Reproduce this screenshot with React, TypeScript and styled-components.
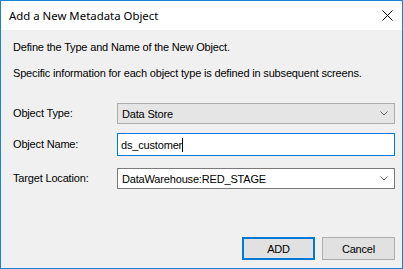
import React from 'react'
import styled, { createGlobalStyle } from 'styled-components'

const GlobalStyle = createGlobalStyle`
  html, body {
    margin: 0;
    padding: 0;
    background: #ffffff;
  }
`

const Window = styled.div`
  box-sizing: border-box;
  width: 403px;
  height: 269px;
  border: 1px solid #1883d7;
  display: flex;
  flex-direction: column;
  background: #f0f0f0;
  font-family: 'Liberation Sans', Arial, sans-serif;
  font-size: 11px;
  letter-spacing: -0.17px;
  color: #000;
`

const TitleBar = styled.div`
  height: 29px;
  background: #ffffff;
  display: flex;
  align-items: center;
  justify-content: space-between;
  padding: 0 9px 0 8px;
`

const Title = styled.span`
  font-family: 'Noto Sans', 'Open Sans', sans-serif;
  font-size: 11.4px;
  letter-spacing: 0;
  color: #000;
  margin-top: -1px;
`

const CloseButton = styled.button`
  border: none;
  background: transparent;
  padding: 0;
  width: 12px;
  height: 12px;
  display: flex;
  align-items: center;
  justify-content: center;
`

const Body = styled.div`
  flex: 1;
  display: flex;
  flex-direction: column;
  padding: 11px 7px 8px 12px;
`

const Intro = styled.p<{ $gap?: number }>`
  margin: 0 0 ${({ $gap }) => $gap ?? 0}px 0;
  line-height: 13px;
`

const Row = styled.div<{ $top: number }>`
  display: flex;
  align-items: center;
  margin-top: ${({ $top }) => $top}px;
`

const Label = styled.label`
  width: 104px;
  line-height: 13px;
`

const Select = styled.div<{ $readonly?: boolean }>`
  box-sizing: border-box;
  width: 278px;
  height: 21px;
  display: flex;
  align-items: center;
  justify-content: space-between;
  padding: 0 6px 0 4px;
  border: 1px solid ${({ $readonly }) => ($readonly ? '#adadad' : '#7a7a7a')};
  background: ${({ $readonly }) => ($readonly ? '#e5e5e5' : '#ffffff')};
`

const TextBox = styled.div`
  box-sizing: border-box;
  width: 278px;
  height: 23px;
  display: flex;
  align-items: center;
  padding: 0 3px;
  border: 1px solid #0078d7;
  background: #ffffff;
`

const Caret = styled.span`
  display: inline-block;
  width: 1px;
  height: 14px;
  background: #000;
`

const Footer = styled.div`
  margin-top: auto;
  display: flex;
  justify-content: flex-end;
  gap: 7px;
`

const Button = styled.button<{ $primary?: boolean }>`
  box-sizing: border-box;
  width: 73px;
  height: 23px;
  padding: 0;
  font-family: 'Liberation Sans', Arial, sans-serif;
  font-size: 11px;
  letter-spacing: -0.17px;
  color: #000;
  background: #e1e1e1;
  border: ${({ $primary }) => ($primary ? '2px solid #0078d7' : '1px solid #adadad')};
`

const Chevron = () => (
  <svg width="8" height="5" viewBox="0 0 8 5">
    <path d="M0.5 0.5 L4 4 L7.5 0.5" fill="none" stroke="#606060" strokeWidth="1" />
  </svg>
)

export default function App() {
  return (
    <>
      <GlobalStyle />
      <Window>
        <TitleBar>
          <Title>Add a New Metadata Object</Title>
          <CloseButton aria-label="Close">
            <svg width="11" height="11" viewBox="0 0 11 11">
              <path d="M0.5 0.5 L10.5 10.5 M10.5 0.5 L0.5 10.5" stroke="#000" strokeWidth="1" />
            </svg>
          </CloseButton>
        </TitleBar>
        <Body>
          <Intro $gap={13}>Define the Type and Name of the New Object.</Intro>
          <Intro>Specific information for each object type is defined in subsequent screens.</Intro>
          <Row $top={23}>
            <Label>Object Type:</Label>
            <Select $readonly>
              <span>Data Store</span>
              <Chevron />
            </Select>
          </Row>
          <Row $top={9}>
            <Label>Object Name:</Label>
            <TextBox>
              <span>ds_customer</span>
              <Caret />
            </TextBox>
          </Row>
          <Row $top={12}>
            <Label>Target Location:</Label>
            <Select>
              <span>DataWarehouse:RED_STAGE</span>
              <Chevron />
            </Select>
          </Row>
          <Footer>
            <Button $primary>ADD</Button>
            <Button>Cancel</Button>
          </Footer>
        </Body>
      </Window>
    </>
  )
}
